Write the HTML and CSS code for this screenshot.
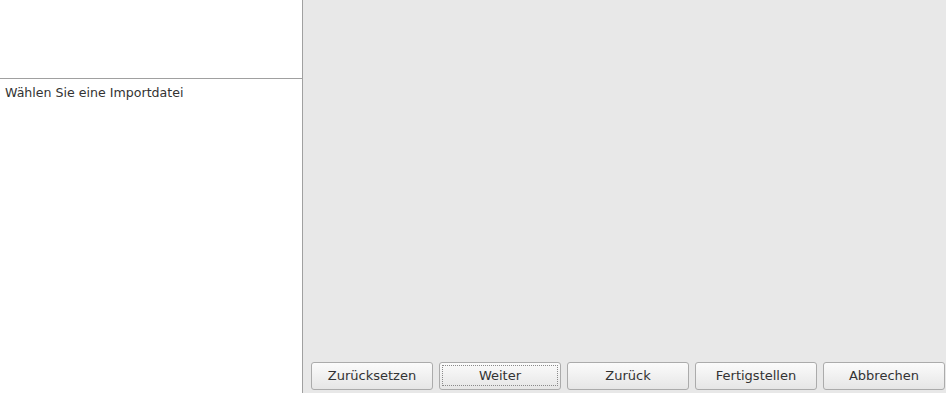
FILE: index.html
```html
<!DOCTYPE html>
<html lang="de">
<head>
    <meta charset="UTF-8">
    <title>Import</title>
    <link rel="stylesheet" href="styles.css">
</head>
<body>
    <div class="wizard">
        <div class="side">
            <div class="side-top"></div>
            <div class="side-list">
                <div class="step">Wählen Sie eine Importdatei</div>
            </div>
        </div>
        <div class="main">
            <div class="content"></div>
            <div class="buttons">
                <button type="button">Zurücksetzen</button>
                <button type="button" class="focused"><span>Weiter</span></button>
                <button type="button">Zurück</button>
                <button type="button">Fertigstellen</button>
                <button type="button">Abbrechen</button>
            </div>
        </div>
    </div>
</body>
</html>
```

FILE: styles.css
```css
/* Wizard layout */
html, body {
    margin: 0;
    padding: 0;
    height: 100%;
}
body {
    font-family: "DejaVu Sans", Verdana, sans-serif;
    font-size: 13px;
    color: #333;
    background-color: #e8e8e8;
}
.wizard {
    display: flex;
    height: 393px;
}
.side {
    width: 302px;
    background-color: #ffffff;
    border-right: 1px solid #a0a0a0;
    display: flex;
    flex-direction: column;
}
.side-top {
    height: 78px;
    border-bottom: 1px solid #a0a0a0;
}
.side-list {
    padding: 6px 5px;
}
.step {
    font-size: 12.6px;
    line-height: 16px;
}
.main {
    flex: 1;
    display: flex;
    flex-direction: column;
}
.content {
    flex: 1;
}
.buttons {
    display: flex;
    gap: 6px;
    padding: 0 1px 3px 8px;
}
button {
    width: 122px;
    height: 28px;
    font-family: inherit;
    font-size: 13px;
    color: #333;
    border: 1px solid #ababab;
    border-radius: 3px;
    background: linear-gradient(#fbfbfb, #e6e6e6);
    padding: 0 0 1px;
}
button.focused {
    padding: 2px 2px 3px;
}
button.focused span {
    display: flex;
    align-items: center;
    justify-content: center;
    height: 100%;
    border: 1px dotted #8a8a8a;
    box-sizing: border-box;
}
```
